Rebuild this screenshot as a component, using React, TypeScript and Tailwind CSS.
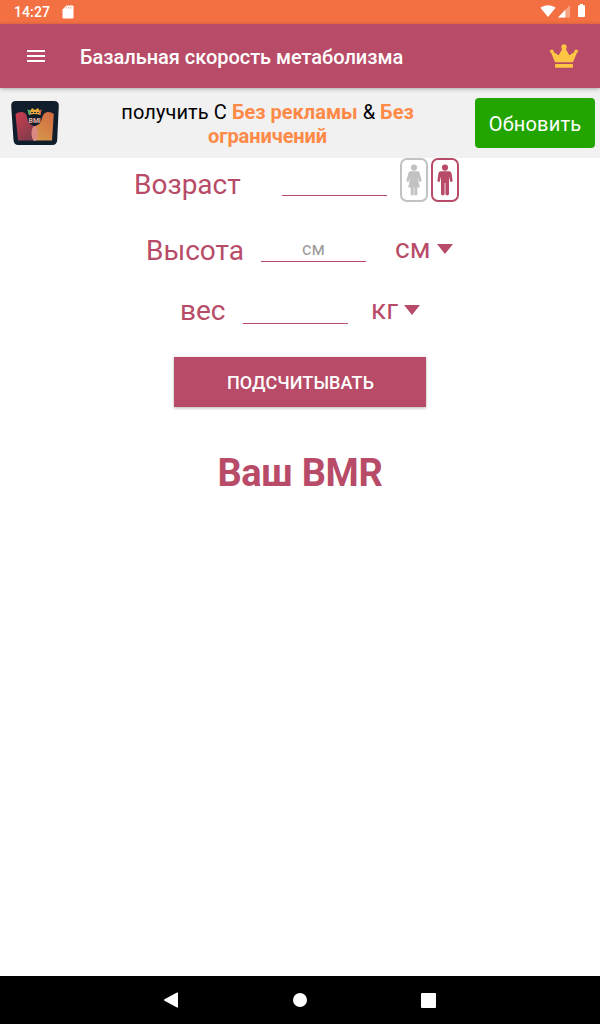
import React from 'react';

const StatusBar: React.FC = () => (
  <div className="flex h-6 items-center bg-[#f37043] px-3.5 text-white">
    <span className="text-[14px] font-medium leading-6 tracking-[0.1px]">14:27</span>
    <svg className="ml-3 h-[14px] w-3" viewBox="0 0 12 14">
      <path d="M4.5 .5h6a1 1 0 0 1 1 1v11a1 1 0 0 1-1 1h-9a1 1 0 0 1-1-1v-8z" fill="currentColor" />
      <path d="M4.5 2v1.5M6.8 2v1.5M9 2v1.5" stroke="#f37043" strokeWidth="1" opacity=".6" />
    </svg>
    <div className="mb-[3px] ml-auto flex items-center">
      <svg className="h-3 w-4" viewBox="0 0 16 12">
        <path d="M.4 2.8C2.6 1 5.2.2 8 .2s5.400 .8 7.600 2.600L8 12z" fill="currentColor" />
      </svg>
      <svg className="mt-px ml-0.5 h-[13px] w-3" viewBox="0 0 12 13">
        <path d="M12 0v12.500H0z" fill="currentColor" opacity=".35" />
        <path d="M7.300 4.800v7.700H0z" fill="currentColor" />
      </svg>
      <svg className="mr-[1px] ml-2 h-[13px] w-[7px]" viewBox="0 0 7 13">
        <path d="M2 0h3v1.300h1.200a.8.8 0 0 1 .8.8v10.100a.8.8 0 0 1-.8.8H.8a.8.8 0 0 1-.8-.8V2.100a.8.8 0 0 1 .8-.8H2z" fill="currentColor" />
      </svg>
    </div>
  </div>
);

const CrownIcon: React.FC = () => (
  <svg className="h-6 w-7" viewBox="0 0 28 24" fill="#ffc544">
    <circle cx="1.800" cy="7.300" r="1.800" />
    <circle cx="14" cy="2.900" r="2.700" />
    <circle cx="26.200" cy="7.300" r="1.800" />
    <path d="M.8 8l1.500-.8 6.400 4 4-7h2.600l4 7 6.400-4 1.500.8-4.200 10.300H5z" />
    <rect x="5" y="20.100" width="18" height="3.700" rx=".8" />
  </svg>
);

const Toolbar: React.FC = () => (
  <header className="relative z-10 flex h-16 items-center bg-[#b84b67] pr-[22px] pl-[27px] text-white shadow-[0_1px_4px_rgba(0,0,0,0.3)]">
    <button type="button" aria-label="Меню" className="flex h-3 w-[18px] flex-col justify-between">
      <span className="h-0.5 w-full bg-white" />
      <span className="h-0.5 w-full bg-white" />
      <span className="h-0.5 w-full bg-white" />
    </button>
    <h1 className="mt-0.5 ml-[35px] text-[20px] font-medium tracking-[-0.03px]">Базальная скорость метаболизма</h1>
    <div className="ml-auto">
      <CrownIcon />
    </div>
  </header>
);

const AppLogo: React.FC = () => (
  <svg className="h-11 w-12 shrink-0" viewBox="0 0 48 44">
    <defs>
      <linearGradient id="leftBody" x1="0" y1="0" x2=".7" y2="1">
        <stop offset="0" stopColor="#cf3d50" />
        <stop offset="1" stopColor="#803c4b" />
      </linearGradient>
      <linearGradient id="rightBody" x1=".8" y1="0" x2=".3" y2="1">
        <stop offset="0" stopColor="#d36c43" />
        <stop offset="1" stopColor="#d69549" />
      </linearGradient>
    </defs>
    <path d="M5 0h38q5 0 4.800 5l-1.600 34q-.3 5-5 5H7.500q-4.700 0-5-5L.2 5Q0 0 5 0z" fill="#101d2b" />
    <path d="M4.500 13q2-2 6.500-2 4 0 5.300 6 1 5.500 3.700 6.500l3.500 2V39.500H7z" fill="url(#leftBody)" />
    <path d="M42.800 13q-2-2-5.800-2-4.500 0-6 6-1 5.500-3.700 6.500l-3.800 2V39.500H41z" fill="url(#rightBody)" />
    <ellipse cx="23.700" cy="32.500" rx="3.200" ry="7.500" fill="#d98b83" />
    <path d="M16.500 8.500l3 1 1.500-2.500 3 2 3-2 1.500 2.500 2-1-1 5.500q-6-2-11.500 0z" fill="#e5aa39" />
    <path d="M16.500 8.500l3 1-.5 4-1 .5z" fill="#4eae73" />
    <path d="M30.500 8.500l-2 1v4l1 .5z" fill="#dc5840" />
    <path d="M20 11.500h7.500" stroke="#25323b" strokeWidth="1.200" strokeDasharray="2 1" />
    <text x="23.700" y="21.500" textAnchor="middle" fontSize="6.800" fontWeight="700" fill="#eeb3a7" fontFamily="Roboto, sans-serif">BMI</text>
  </svg>
);

const UpgradeBanner: React.FC = () => (
  <section className="flex h-[70px] items-center bg-[#f1f1f1] pr-[5px] pl-[11px]">
    <AppLogo />
    <div className="mt-0.5 ml-10 flex w-[337px] flex-col items-center text-[20px] leading-6 text-black">
      <p className="flex gap-[5px]">
        <span className="tracking-[0.1px]">получить С</span>
        <b className="font-bold text-[#ff8a48]">Без рекламы</b>
        <span>&amp;</span>
        <b className="font-bold text-[#ff8a48]">Без</b>
      </p>
      <b className="font-bold tracking-[-0.1px] text-[#ff8a48]">ограничений</b>
    </div>
    <button type="button" className="ml-auto h-[50px] w-[120px] rounded bg-[#23a500] pt-0.5 text-[20px] tracking-[0.2px] text-white">
      Обновить
    </button>
  </section>
);

const FemaleIcon: React.FC = () => (
  <svg className="h-8 w-4" viewBox="0 0 16 32" fill="currentColor">
    <circle cx="8" cy="3.600" r="3.100" />
    <path d="M4.500 7.300h7q1.500 0 2 1.400l2 7.300q.3 1.600-1 1.900-1 .1-1.500-.9L12 14l.4 3 1.400 6.500h-2.500v6.800q0 1.200-1.500 1.200t-1.500-1.200v-6.800h-.6v6.800q0 1.200-1.500 1.200t-1.500-1.200v-6.800H2.200L3.600 17l.4-3-1 3q-.5 1-1.500.9-1.300-.3-1-1.900l2-7.300q.5-1.400 2-1.400z" />
  </svg>
);

const MaleIcon: React.FC = () => (
  <svg className="h-8 w-4" viewBox="0 0 16 32" fill="currentColor">
    <circle cx="8" cy="3.600" r="3.100" />
    <path d="M4 7.300h8q2 0 2.500 1.700l1.100 7.500q.1 1.400-1.100 1.500t-1.500-1.200l-1-4.300v17.300q0 1.700-1.800 1.700t-1.800-1.700V19h-.800v10.800q0 1.700-1.800 1.700T4 29.800V12.500l-1 4.300Q2.700 18.100 1.500 18T.4 16.500L1.500 9Q2 7.300 4 7.300z" />
  </svg>
);

const UnitSelect: React.FC<{ unit: string }> = ({ unit }) => (
  <button type="button" className="flex items-center text-[28px] leading-8">
    <span>{unit}</span>
    <svg className="mb-px ml-[6.5px] h-2.5 w-4" viewBox="0 0 16 10">
      <path d="M0 0h16L8 10z" fill="currentColor" />
    </svg>
  </button>
);

const inputClass =
  'w-[105px] border-b border-[#b84b67] text-center text-[18px] outline-none placeholder:text-[#9c9c9c]';

export default function App() {
  return (
    <div className="flex h-screen w-[600px] flex-col overflow-hidden bg-white font-['Roboto',sans-serif]">
      <StatusBar />
      <Toolbar />
      <UpgradeBanner />
      <main className="flex flex-1 flex-col text-[#b84b67]">
        <div className="flex h-[66px] pl-[134px]">
          <label className="mt-[11px] w-[148px] text-[28px] leading-8">Возраст</label>
          <input aria-label="Возраст" className={`h-[38px] ${inputClass}`} />
          <div className="ml-[13px] flex gap-[3px]">
            <button type="button" aria-label="Женский" className="flex h-11 w-7 items-center justify-center rounded-[7px] border-2 border-[#c2c2c2] text-[#c2c2c2]">
              <FemaleIcon />
            </button>
            <button type="button" aria-label="Мужской" className="flex h-11 w-7 items-center justify-center rounded-[7px] border-2 border-[#b84b67]">
              <MaleIcon />
            </button>
          </div>
        </div>
        <div className="flex h-[60px] pl-[146px]">
          <label className="mt-[11px] w-[115px] text-[28px] leading-8">Высота</label>
          <input aria-label="Высота" placeholder="см" className={`h-[38px] pt-3 ${inputClass}`} />
          <div className="mt-[9px] ml-[29px]">
            <UnitSelect unit="см" />
          </div>
        </div>
        <div className="flex h-[73px] pl-[180px]">
          <label className="mt-[11px] w-[63px] text-[28px] leading-8">вес</label>
          <input aria-label="вес" className={`h-10 ${inputClass}`} />
          <div className="mt-2.5 ml-[23px]">
            <UnitSelect unit="кг" />
          </div>
        </div>
        <button type="button" className="h-[50px] w-[252px] self-center bg-[#b84b67] pl-px text-[18px] font-medium tracking-[0.1px] text-white shadow-[0_1px_3px_rgba(0,0,0,0.3)]">
          ПОДСЧИТЫВАТЬ
        </button>
        <h2 className="mt-11 text-center text-[38px] leading-[44px] font-bold tracking-[-0.3px]">Ваш BMR</h2>
      </main>
      <nav className="flex h-12 items-center justify-between bg-black pr-[164px] pl-[163px] text-white">
        <svg className="h-4 w-[15px]" viewBox="0 0 15 16">
          <path d="M1.500 7.300L14 .5q1-.4 1 .6v13.800q0 1-1 .6L1.500 8.700q-1.300-.7 0-1.400z" fill="currentColor" />
        </svg>
        <span className="size-3.5 rounded-full bg-white" />
        <span className="size-[15px] rounded-[1px] bg-white" />
      </nav>
    </div>
  );
}
